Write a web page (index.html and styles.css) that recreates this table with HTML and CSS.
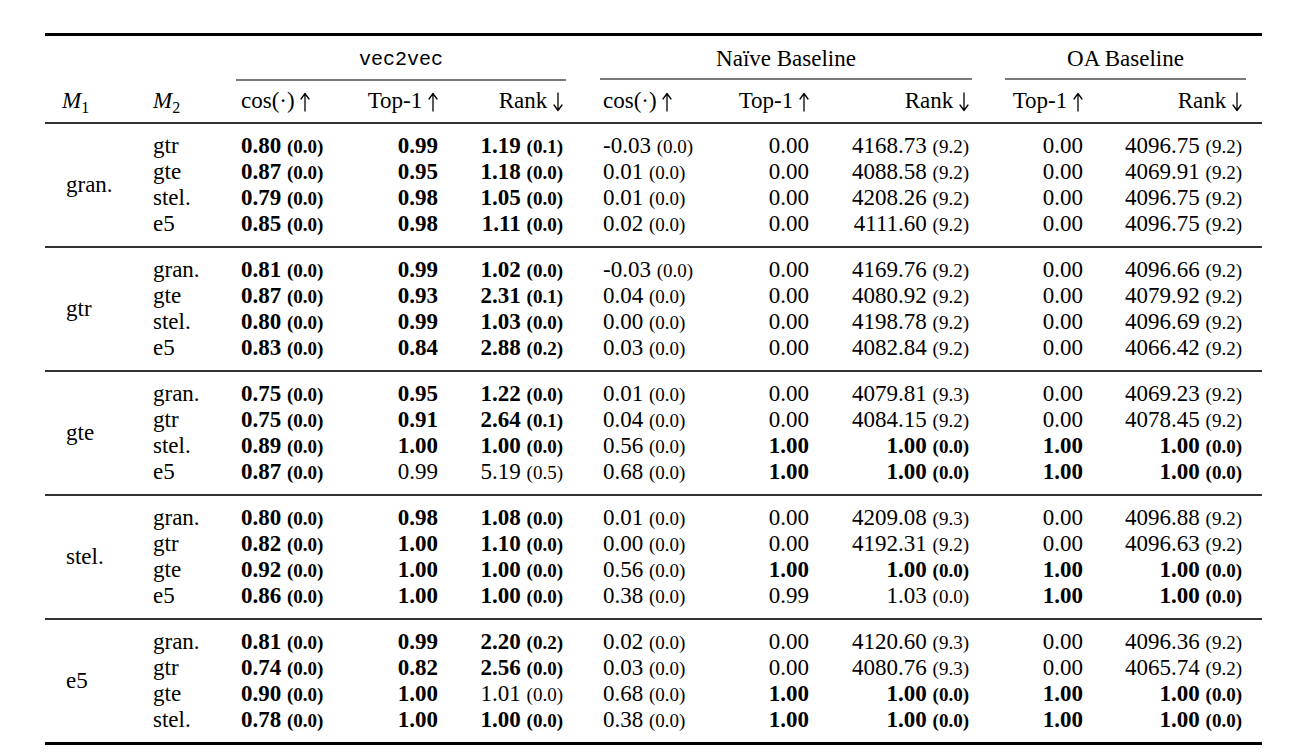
FILE: index.html
```html
<!DOCTYPE html>
<html>
<head>
<meta charset="utf-8">
<link rel="stylesheet" href="styles.css">
</head>
<body>
<table class="res">
<colgroup>
<col class="w1"><col class="w2"><col class="w3"><col class="w4"><col class="w5"><col class="w6"><col class="w7"><col class="w8"><col class="w9"><col class="w10">
</colgroup>
<thead>
<tr class="hg">
<th></th><th></th>
<th colspan="3"><div class="cmid c-v2v"><span class="mono">vec2vec</span></div></th>
<th colspan="3"><div class="cmid c-naive">Naïve Baseline</div></th>
<th colspan="2"><div class="cmid c-oa">OA Baseline</div></th>
</tr>
<tr class="hc">
<th class="m1"><i>M</i><sub>1</sub></th>
<th class="m2"><i>M</i><sub>2</sub></th>
<th class="k3">cos(·) <svg class="arr" viewBox="0 0 10 20"><path d="M5 19V2M1 7L5 1.5L9 7"/></svg></th>
<th class="k4">Top-1 <svg class="arr" viewBox="0 0 10 20"><path d="M5 19V2M1 7L5 1.5L9 7"/></svg></th>
<th class="k5">Rank <svg class="arr" viewBox="0 0 10 20"><path d="M5 1V18M1 13L5 18.5L9 13"/></svg></th>
<th class="k6">cos(·) <svg class="arr" viewBox="0 0 10 20"><path d="M5 19V2M1 7L5 1.5L9 7"/></svg></th>
<th class="k7">Top-1 <svg class="arr" viewBox="0 0 10 20"><path d="M5 19V2M1 7L5 1.5L9 7"/></svg></th>
<th class="k8">Rank <svg class="arr" viewBox="0 0 10 20"><path d="M5 1V18M1 13L5 18.5L9 13"/></svg></th>
<th class="k9">Top-1 <svg class="arr" viewBox="0 0 10 20"><path d="M5 19V2M1 7L5 1.5L9 7"/></svg></th>
<th class="k10">Rank <svg class="arr" viewBox="0 0 10 20"><path d="M5 1V18M1 13L5 18.5L9 13"/></svg></th>
</tr>
</thead>

<tbody>
<tr class="first"><td class="m1" rowspan="4">gran.</td><td class="m2">gtr</td><td class="k3 b">0.80 <small>(0.0)</small></td><td class="k4 b">0.99</td><td class="k5 b">1.19 <small>(0.1)</small></td><td class="k6">-0.03 <small>(0.0)</small></td><td class="k7">0.00</td><td class="k8">4168.73 <small>(9.2)</small></td><td class="k9">0.00</td><td class="k10">4096.75 <small>(9.2)</small></td></tr>
<tr><td class="m2">gte</td><td class="k3 b">0.87 <small>(0.0)</small></td><td class="k4 b">0.95</td><td class="k5 b">1.18 <small>(0.0)</small></td><td class="k6">0.01 <small>(0.0)</small></td><td class="k7">0.00</td><td class="k8">4088.58 <small>(9.2)</small></td><td class="k9">0.00</td><td class="k10">4069.91 <small>(9.2)</small></td></tr>
<tr><td class="m2">stel.</td><td class="k3 b">0.79 <small>(0.0)</small></td><td class="k4 b">0.98</td><td class="k5 b">1.05 <small>(0.0)</small></td><td class="k6">0.01 <small>(0.0)</small></td><td class="k7">0.00</td><td class="k8">4208.26 <small>(9.2)</small></td><td class="k9">0.00</td><td class="k10">4096.75 <small>(9.2)</small></td></tr>
<tr class="last"><td class="m2">e5</td><td class="k3 b">0.85 <small>(0.0)</small></td><td class="k4 b">0.98</td><td class="k5 b">1.11 <small>(0.0)</small></td><td class="k6">0.02 <small>(0.0)</small></td><td class="k7">0.00</td><td class="k8">4111.60 <small>(9.2)</small></td><td class="k9">0.00</td><td class="k10">4096.75 <small>(9.2)</small></td></tr>
</tbody>

<tbody>
<tr class="first"><td class="m1" rowspan="4">gtr</td><td class="m2">gran.</td><td class="k3 b">0.81 <small>(0.0)</small></td><td class="k4 b">0.99</td><td class="k5 b">1.02 <small>(0.0)</small></td><td class="k6">-0.03 <small>(0.0)</small></td><td class="k7">0.00</td><td class="k8">4169.76 <small>(9.2)</small></td><td class="k9">0.00</td><td class="k10">4096.66 <small>(9.2)</small></td></tr>
<tr><td class="m2">gte</td><td class="k3 b">0.87 <small>(0.0)</small></td><td class="k4 b">0.93</td><td class="k5 b">2.31 <small>(0.1)</small></td><td class="k6">0.04 <small>(0.0)</small></td><td class="k7">0.00</td><td class="k8">4080.92 <small>(9.2)</small></td><td class="k9">0.00</td><td class="k10">4079.92 <small>(9.2)</small></td></tr>
<tr><td class="m2">stel.</td><td class="k3 b">0.80 <small>(0.0)</small></td><td class="k4 b">0.99</td><td class="k5 b">1.03 <small>(0.0)</small></td><td class="k6">0.00 <small>(0.0)</small></td><td class="k7">0.00</td><td class="k8">4198.78 <small>(9.2)</small></td><td class="k9">0.00</td><td class="k10">4096.69 <small>(9.2)</small></td></tr>
<tr class="last"><td class="m2">e5</td><td class="k3 b">0.83 <small>(0.0)</small></td><td class="k4 b">0.84</td><td class="k5 b">2.88 <small>(0.2)</small></td><td class="k6">0.03 <small>(0.0)</small></td><td class="k7">0.00</td><td class="k8">4082.84 <small>(9.2)</small></td><td class="k9">0.00</td><td class="k10">4066.42 <small>(9.2)</small></td></tr>
</tbody>

<tbody>
<tr class="first"><td class="m1" rowspan="4">gte</td><td class="m2">gran.</td><td class="k3 b">0.75 <small>(0.0)</small></td><td class="k4 b">0.95</td><td class="k5 b">1.22 <small>(0.0)</small></td><td class="k6">0.01 <small>(0.0)</small></td><td class="k7">0.00</td><td class="k8">4079.81 <small>(9.3)</small></td><td class="k9">0.00</td><td class="k10">4069.23 <small>(9.2)</small></td></tr>
<tr><td class="m2">gtr</td><td class="k3 b">0.75 <small>(0.0)</small></td><td class="k4 b">0.91</td><td class="k5 b">2.64 <small>(0.1)</small></td><td class="k6">0.04 <small>(0.0)</small></td><td class="k7">0.00</td><td class="k8">4084.15 <small>(9.2)</small></td><td class="k9">0.00</td><td class="k10">4078.45 <small>(9.2)</small></td></tr>
<tr><td class="m2">stel.</td><td class="k3 b">0.89 <small>(0.0)</small></td><td class="k4 b">1.00</td><td class="k5 b">1.00 <small>(0.0)</small></td><td class="k6">0.56 <small>(0.0)</small></td><td class="k7 b">1.00</td><td class="k8 b">1.00 <small>(0.0)</small></td><td class="k9 b">1.00</td><td class="k10 b">1.00 <small>(0.0)</small></td></tr>
<tr class="last"><td class="m2">e5</td><td class="k3 b">0.87 <small>(0.0)</small></td><td class="k4">0.99</td><td class="k5">5.19 <small>(0.5)</small></td><td class="k6">0.68 <small>(0.0)</small></td><td class="k7 b">1.00</td><td class="k8 b">1.00 <small>(0.0)</small></td><td class="k9 b">1.00</td><td class="k10 b">1.00 <small>(0.0)</small></td></tr>
</tbody>

<tbody>
<tr class="first"><td class="m1" rowspan="4">stel.</td><td class="m2">gran.</td><td class="k3 b">0.80 <small>(0.0)</small></td><td class="k4 b">0.98</td><td class="k5 b">1.08 <small>(0.0)</small></td><td class="k6">0.01 <small>(0.0)</small></td><td class="k7">0.00</td><td class="k8">4209.08 <small>(9.3)</small></td><td class="k9">0.00</td><td class="k10">4096.88 <small>(9.2)</small></td></tr>
<tr><td class="m2">gtr</td><td class="k3 b">0.82 <small>(0.0)</small></td><td class="k4 b">1.00</td><td class="k5 b">1.10 <small>(0.0)</small></td><td class="k6">0.00 <small>(0.0)</small></td><td class="k7">0.00</td><td class="k8">4192.31 <small>(9.2)</small></td><td class="k9">0.00</td><td class="k10">4096.63 <small>(9.2)</small></td></tr>
<tr><td class="m2">gte</td><td class="k3 b">0.92 <small>(0.0)</small></td><td class="k4 b">1.00</td><td class="k5 b">1.00 <small>(0.0)</small></td><td class="k6">0.56 <small>(0.0)</small></td><td class="k7 b">1.00</td><td class="k8 b">1.00 <small>(0.0)</small></td><td class="k9 b">1.00</td><td class="k10 b">1.00 <small>(0.0)</small></td></tr>
<tr class="last"><td class="m2">e5</td><td class="k3 b">0.86 <small>(0.0)</small></td><td class="k4 b">1.00</td><td class="k5 b">1.00 <small>(0.0)</small></td><td class="k6">0.38 <small>(0.0)</small></td><td class="k7">0.99</td><td class="k8">1.03 <small>(0.0)</small></td><td class="k9 b">1.00</td><td class="k10 b">1.00 <small>(0.0)</small></td></tr>
</tbody>

<tbody>
<tr class="first"><td class="m1" rowspan="4">e5</td><td class="m2">gran.</td><td class="k3 b">0.81 <small>(0.0)</small></td><td class="k4 b">0.99</td><td class="k5 b">2.20 <small>(0.2)</small></td><td class="k6">0.02 <small>(0.0)</small></td><td class="k7">0.00</td><td class="k8">4120.60 <small>(9.3)</small></td><td class="k9">0.00</td><td class="k10">4096.36 <small>(9.2)</small></td></tr>
<tr><td class="m2">gtr</td><td class="k3 b">0.74 <small>(0.0)</small></td><td class="k4 b">0.82</td><td class="k5 b">2.56 <small>(0.0)</small></td><td class="k6">0.03 <small>(0.0)</small></td><td class="k7">0.00</td><td class="k8">4080.76 <small>(9.3)</small></td><td class="k9">0.00</td><td class="k10">4065.74 <small>(9.2)</small></td></tr>
<tr><td class="m2">gte</td><td class="k3 b">0.90 <small>(0.0)</small></td><td class="k4 b">1.00</td><td class="k5">1.01 <small>(0.0)</small></td><td class="k6">0.68 <small>(0.0)</small></td><td class="k7 b">1.00</td><td class="k8 b">1.00 <small>(0.0)</small></td><td class="k9 b">1.00</td><td class="k10 b">1.00 <small>(0.0)</small></td></tr>
<tr class="last"><td class="m2">stel.</td><td class="k3 b">0.78 <small>(0.0)</small></td><td class="k4 b">1.00</td><td class="k5 b">1.00 <small>(0.0)</small></td><td class="k6">0.38 <small>(0.0)</small></td><td class="k7 b">1.00</td><td class="k8 b">1.00 <small>(0.0)</small></td><td class="k9 b">1.00</td><td class="k10 b">1.00 <small>(0.0)</small></td></tr>
</tbody>
</table>
</body>
</html>
```
FILE: styles.css
```css
html, body {
  margin: 0;
  padding: 0;
  background: #ffffff;
}
body {
  padding: 33px 0 0 45px;
  font-family: "Liberation Serif", "Times New Roman", serif;
  color: #000;
}
.res {
  table-layout: fixed;
  width: 1217px;
  border-collapse: collapse;
  border-top: 3px solid #000;
  border-bottom: 3px solid #000;
  font-size: 23px;
  line-height: 26px;
}
.w1 { width: 95px; }
.w2 { width: 96px; }
.w3 { width: 114px; }
.w4 { width: 93px; }
.w5 { width: 140px; }
.w6 { width: 117px; }
.w7 { width: 114px; }
.w8 { width: 174px; }
.w9 { width: 100px; }
.w10 { width: 174px; }

.res th, .res td {
  padding: 0;
  font-weight: normal;
  white-space: nowrap;
  vertical-align: middle;
}
.res td {
  height: 26px;
}
.res small {
  font-size: 19px;
  line-height: 1;
}
.res .b {
  font-weight: bold;
}

.arr {
  width: 10px;
  height: 20px;
  vertical-align: -4px;
  fill: none;
  stroke: #000;
  stroke-width: 1.3;
  stroke-linecap: round;
  stroke-linejoin: round;
}

.hg th {
  padding: 0;
  text-align: center;
}
.cmid {
  padding: 9px 0 6px 0;
  border-bottom: 2px solid #7a7a7a;
  line-height: 26px;
}
.c-v2v { margin: 0 17px 0 0; }
.c-naive { margin: 0 16px 0 17px; }
.c-oa { margin: 0 16px 0 17px; }
.mono {
  font-family: "Liberation Mono", "Courier New", monospace;
  font-size: 20px;
}

.hc th {
  padding-top: 7px;
  padding-bottom: 8px;
  height: 26px;
}
.hc {
  border-bottom: 2px solid #333;
}
.hc i {
  font-style: italic;
}
.hc sub {
  font-size: 16px;
  vertical-align: -5px;
  line-height: 0;
}

.res tbody {
  border-top: 2px solid #333;
}
.res tbody:first-of-type {
  border-top: 0;
}
.res tbody tr.first td {
  padding-top: 9px;
}
.res tbody tr.last td {
  padding-bottom: 9px;
}
.res tbody tr.first td.m1 {
  padding-top: 0;
  padding-bottom: 0;
}

.m1 { text-align: left; padding-left: 21px !important; }
.hc .m1 { padding-left: 17px !important; }
.m2 { text-align: left; padding-left: 13px !important; }
.k3 { text-align: left; padding-left: 5px !important; }
.k4 { text-align: right; padding-right: 5px !important; }
.k5 { text-align: right; padding-right: 20px !important; }
.k6 { text-align: left; padding-left: 20px !important; }
.k7 { text-align: right; padding-right: 5px !important; }
.k8 { text-align: right; padding-right: 19px !important; }
.k9 { text-align: right; padding-right: 5px !important; }
.k10 { text-align: right; padding-right: 20px !important; }
```
